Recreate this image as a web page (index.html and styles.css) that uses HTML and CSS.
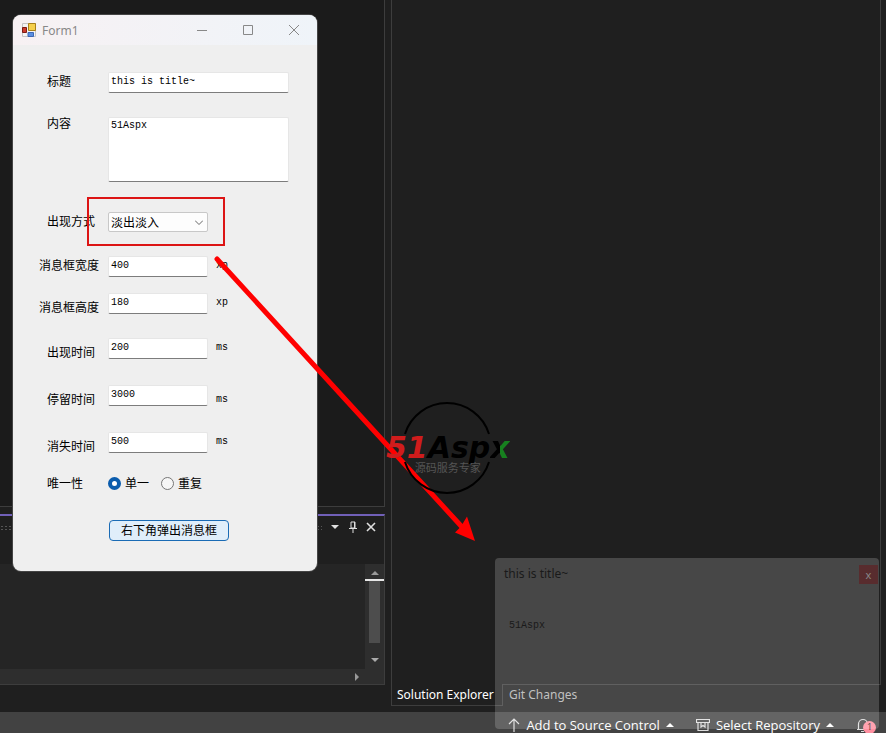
FILE: index.html
```html
<!DOCTYPE html>
<html lang="zh-CN">

<head>
    <meta charset="UTF-8">
    <meta name="viewport" content="width=device-width, initial-scale=1.0">
    <title>Form1</title>
    <link rel="stylesheet" href="styles.css">
</head>

<body>
    <!-- IDE behind the windows -->
    <main class="workspace">
        <section class="left-dock">
            <div class="editor"></div>
            <div class="output">
                <div class="output-header">
                    <span class="grip"></span>
                    <button class="tool" aria-label="Window position">
                        <svg width="10" height="10" viewBox="0 0 10 10"><path d="M1 3h8L5 7z" fill="#e0e0e0"/></svg>
                    </button>
                    <button class="tool" aria-label="Auto hide">
                        <svg width="10" height="12" viewBox="0 0 10 12"><path d="M3 1h4v6H3zM1 7.500h8M5 7v5M6.500 1v6" fill="none" stroke="#e0e0e0"/></svg>
                    </button>
                    <button class="tool" aria-label="Close">
                        <svg width="10" height="10" viewBox="0 0 10 10"><path d="M1 1l8 8M9 1L1 9" stroke="#e0e0e0" stroke-width="1.600"/></svg>
                    </button>
                </div>
                <div class="output-body">
                    <div class="output-text"></div>
                    <div class="vscroll">
                        <svg width="10" height="6" viewBox="0 0 10 6"><path d="M1 5h8L5 1z" fill="#999"/></svg>
                        <span class="caret-mark"></span>
                        <span class="thumb"></span>
                        <svg width="10" height="6" viewBox="0 0 10 6"><path d="M1 1h8L5 5z" fill="#aaa"/></svg>
                    </div>
                </div>
                <div class="hscroll">
                    <svg width="6" height="10" viewBox="0 0 6 10"><path d="M1 1v8l4-4z" fill="#999"/></svg>
                </div>
            </div>
        </section>
        <section class="right-dock">
            <div class="explorer"></div>
            <nav class="tabs">
                <a class="tab active" href="#">Solution Explorer</a>
                <a class="tab" href="#">Git Changes</a>
            </nav>
        </section>
    </main>

    <footer class="statusbar">
        <button class="status-item">
            <svg width="12" height="14" viewBox="0 0 12 14"><path d="M6 14V1M1 6l5-5 5 5" fill="none" stroke="#ddd" stroke-width="1.200"/></svg>
            <span>Add to Source Control</span>
            <svg width="8" height="4" viewBox="0 0 8 4"><path d="M0 4h8L4 0z" fill="#fff"/></svg>
        </button>
        <button class="status-item">
            <svg width="14" height="14" viewBox="0 0 14 14"><path d="M.5 1.500h13v3H.5zM2 4.500v8h10v-8M5 5v4l2-1.500L9 9V5" fill="none" stroke="#ddd" stroke-width="1.200"/></svg>
            <span>Select Repository</span>
            <svg width="8" height="4" viewBox="0 0 8 4"><path d="M0 4h8L4 0z" fill="#fff"/></svg>
        </button>
        <button class="status-item bell" aria-label="Notifications">
            <svg width="14" height="14" viewBox="0 0 14 14"><path d="M2.500 11V6a4.500 4.500 0 0 1 9 0v5M1 11.500h12M5 13.500h3" fill="none" stroke="#ddd" stroke-width="1.200"/></svg>
            <span class="badge">1</span>
        </button>
    </footer>

    <!-- message box fading in -->
    <aside class="message">
        <header class="message-header">
            <span class="message-title">this is title~</span>
            <button class="message-close">x</button>
        </header>
        <p class="message-text">51Aspx</p>
    </aside>

    <!-- Form1 -->
    <div class="window">
        <header class="titlebar">
            <svg width="14" height="14" viewBox="0 0 14 14">
                <path d="M.5.500h13v13H.5z" fill="#f4f4f4" stroke="#c4c4c4"/>
                <path d="M6.500.500h7v7h-7z" fill="#f5cf4b" stroke="#a8801a"/>
                <path d="M.5 4.500h4v5h-4z" fill="#cc3a2c" stroke="#7c1c14"/>
                <path d="M6 9.500h5.500v4H6z" fill="#5b8fe0" stroke="#3c66b4"/>
            </svg>
            <span class="window-title">Form1</span>
            <button class="caption" aria-label="Minimize">
                <svg width="10" height="10" viewBox="0 0 10 10"><path d="M0 5.500h10" stroke="#888"/></svg>
            </button>
            <button class="caption" aria-label="Maximize">
                <svg width="10" height="10" viewBox="0 0 10 10"><path d="M.5.500h9v9h-9z" fill="none" stroke="#888"/></svg>
            </button>
            <button class="caption" aria-label="Close">
                <svg width="10" height="10" viewBox="0 0 10 10"><path d="M0 0l10 10M10 0L0 10" stroke="#888"/></svg>
            </button>
        </header>
        <form class="form">
            <div class="row">
                <label for="title">标题</label>
                <input class="long" id="title" type="text" value="this is title~">
            </div>
            <div class="row">
                <label class="top" for="content">内容</label>
                <textarea class="long" id="content">51Aspx</textarea>
            </div>
            <div class="row far">
                <label for="mode">出现方式</label>
                <div class="select">
                    <select id="mode">
                        <option>淡出淡入</option>
                    </select>
                    <svg class="chevron" width="8" height="5" viewBox="0 0 8 5"><path d="M0 .5l4 4 4-4" fill="none" stroke="#666"/></svg>
                </div>
            </div>
            <div class="row">
                <label class="full" for="width">消息框宽度</label>
                <input id="width" type="text" value="400">
                <span class="unit">xp</span>
            </div>
            <div class="row near">
                <label class="full low" for="height">消息框高度</label>
                <input id="height" type="text" value="180">
                <span class="unit">xp</span>
            </div>
            <div class="row">
                <label class="low" for="show">出现时间</label>
                <input id="show" type="text" value="200">
                <span class="unit">ms</span>
            </div>
            <div class="row mid">
                <label class="low" for="stay">停留时间</label>
                <input id="stay" type="text" value="3000">
                <span class="unit low">ms</span>
            </div>
            <div class="row mid">
                <label class="low" for="hide">消失时间</label>
                <input id="hide" type="text" value="500">
                <span class="unit">ms</span>
            </div>
            <div class="row options" role="radiogroup" aria-labelledby="unique">
                <span class="label" id="unique">唯一性</span>
                <label class="option"><input type="radio" name="unique" checked>单一</label>
                <label class="option"><input type="radio" name="unique">重复</label>
            </div>
            <button class="submit" type="button">右下角弹出消息框</button>
        </form>
    </div>

    <!-- highlight box and arrow -->
    <svg class="marks" width="480" height="550" viewBox="0 0 480 550">
        <path d="M88 198h136v47H88z" fill="none" stroke="#dc1414" stroke-width="2"/>
        <path d="M217 259L462 527" stroke="#f00" stroke-width="5" stroke-linecap="round"/>
        <path d="M475 541l-20-8.500 6-6 6-10z" fill="#f00"/>
    </svg>

    <div class="logo">
        <svg class="ring" width="92" height="92" viewBox="0 0 92 92">
            <path d="M4 32A44 44 0 0 1 88 32M4 60A44 44 0 0 0 88 60" fill="none" stroke="#000" stroke-width="2"/>
        </svg>
        <div class="brand"><span class="num">51</span>Asp<span class="ex">x</span></div>
        <div class="slogan">源码服务专家</div>
    </div>
</body>

</html>
```
FILE: styles.css
```css
* {
    box-sizing: border-box;
}

body {
    position: relative;
    margin: 0;
    min-height: 100vh;
    display: flex;
    flex-direction: column;
    overflow: hidden;
    background-color: #1f1f1f;
    font-family: "Noto Sans", "Noto Sans CJK SC", sans-serif;
    font-size: 12px;
}

button {
    font: inherit;
    padding: 0;
    border: none;
    background: none;
}

svg {
    display: block;
    flex: none;
}

/* IDE */
.workspace {
    flex: 1;
    display: flex;
    gap: 6px;
    padding-right: 5px;
}

.left-dock {
    width: 385px;
    flex: none;
    display: flex;
    flex-direction: column;
    gap: 7px;
    padding-bottom: 27px;
}

.editor {
    flex: 1;
    background-color: #1b1b1b;
    border-right: 1px solid #3d3d3d;
    border-bottom: 1px solid #3d3d3d;
}

.output {
    border-top: 2px solid #7160b8;
    border-right: 1px solid #3d3d3d;
    border-bottom: 1px solid #3d3d3d;
}

.output-header {
    display: flex;
    align-items: center;
    gap: 8px;
    height: 48px;
    padding: 0 8px 26px 0;
}

.grip {
    flex: 1;
    height: 6px;
    margin-top: 2px;
    background-image: radial-gradient(#555 1px, transparent 1px);
    background-size: 4px 3px;
}

.tool {
    display: flex;
}

.output-body {
    display: flex;
    height: 105px;
}

.output-text {
    flex: 1;
    background-color: #252525;
}

.vscroll {
    width: 19px;
    padding: 6px 0;
    display: flex;
    flex-direction: column;
    align-items: center;
    background-color: #2e2e2e;
}

.caret-mark {
    width: 19px;
    height: 2px;
    margin-top: 3px;
    background-color: #e6e6e6;
}

.thumb {
    width: 11px;
    height: 62px;
    margin-bottom: 14px;
    background-color: #4d4d4d;
}

.hscroll {
    display: flex;
    align-items: center;
    justify-content: flex-end;
    height: 15px;
    padding-right: 24px;
    background-color: #2e2e2e;
}

.right-dock {
    flex: 1;
    display: flex;
    flex-direction: column;
    padding-bottom: 6px;
}

.explorer {
    flex: 1;
    border-left: 1px solid #3d3d3d;
    border-right: 1px solid #3d3d3d;
}

.tabs {
    display: flex;
}

.tab {
    flex: 1;
    height: 22px;
    padding-left: 6px;
    line-height: 20px;
    color: #b4b4b4;
    text-decoration: none;
    border-top: 1px solid #3d3d3d;
}

.tab.active {
    flex: none;
    width: 112px;
    padding-left: 5px;
    line-height: 22px;
    color: #fff;
    border: 1px solid #3d3d3d;
    border-top: none;
}

.statusbar {
    height: 21px;
    display: flex;
    align-items: center;
    justify-content: flex-end;
    gap: 22px;
    padding: 4px 10px 0 0;
    overflow: hidden;
    background-color: #424242;
    font-family: "Open Sans", sans-serif;
    font-size: 13px;
}

.status-item {
    display: flex;
    align-items: center;
    gap: 6px;
    color: #fff;
}

.bell {
    position: relative;
    padding-right: 6px;
}

.badge {
    position: absolute;
    right: 0;
    top: 3px;
    width: 13px;
    height: 13px;
    border-radius: 7px;
    background-color: #ff8fa0;
    color: #222;
    font-size: 9px;
    line-height: 12px;
}

/* message box */
.message {
    position: absolute;
    right: 7px;
    bottom: 4px;
    width: 384px;
    height: 171px;
    border-radius: 4px;
    background-color: rgba(255, 255, 255, 0.18);
    color: #1a1a1a;
}

.message-header {
    display: flex;
    justify-content: space-between;
    padding: 7px 1px 0 9px;
}

.message-title {
    line-height: 17px;
}

.message-close {
    width: 19px;
    height: 19px;
    background-color: #582c2e;
    color: #888;
    font-size: 11px;
    line-height: 18px;
}

.message-text {
    margin: 34px 0 0 14px;
    font: 10px/16px "Liberation Mono", monospace;
}

/* Form1 */
.window {
    position: absolute;
    left: 13px;
    top: 15px;
    width: 304px;
    border-radius: 8px;
    overflow: hidden;
    background-color: #efefef;
    box-shadow: 0 0 0 1px #444;
    color: #000;
}

.titlebar {
    display: flex;
    align-items: center;
    height: 30px;
    padding-left: 9px;
    background: linear-gradient(90deg, #f7f1f3, #eff4f9);
}

.window-title {
    flex: 1;
    margin-left: 6px;
    color: #888;
}

.caption {
    display: flex;
    justify-content: center;
    width: 46px;
}

.form {
    padding: 27px 28px 30px 26px;
}

.row {
    display: flex;
    align-items: flex-start;
    margin-top: 24px;
}

.row:first-child {
    margin-top: 0;
}

.row.near {
    margin-top: 16px;
}

.row.mid {
    margin-top: 26px;
}

.row.far {
    margin-top: 30px;
}

.row > label,
.label {
    width: 69px;
    padding-left: 8px;
    line-height: 20px;
}

.row > label.full {
    padding-left: 0;
}

.row > label.top {
    line-height: 14px;
}

.row > label.low {
    padding-top: 5px;
    margin-bottom: -4px;
}

.form input[type="text"],
.form textarea {
    width: 100px;
    height: 21px;
    padding: 0 2px 2px;
    border: 1px solid #e6e6e6;
    border-bottom-color: #7c7c7c;
    border-radius: 2px;
    background-color: #fff;
    color: #000;
    font: 10px/16px "Liberation Mono", monospace;
    resize: none;
    outline: none;
}

.form input.long,
.form textarea.long {
    width: 181px;
}

.form textarea.long {
    height: 65px;
}

.select {
    position: relative;
}

.select select {
    display: block;
    width: 100px;
    height: 20px;
    padding: 0 2px;
    appearance: none;
    border: 1px solid #c8c8c8;
    border-radius: 2px;
    background-color: #fdfdfd;
    color: #000;
    font: inherit;
}

.chevron {
    position: absolute;
    right: 5px;
    top: 8px;
}

.unit {
    margin-left: 8px;
    font: 10px/20px "Liberation Mono", monospace;
}

.unit.low {
    padding-top: 5px;
    margin-bottom: -4px;
}

.row.options {
    align-items: center;
    height: 13px;
}

.row > label.option {
    display: flex;
    align-items: center;
    gap: 4px;
    width: auto;
    padding: 0;
    margin-right: 12px;
}

.option input {
    appearance: none;
    width: 13px;
    height: 13px;
    margin: 0;
    border: 1px solid #777;
    border-radius: 50%;
    background-color: #f6f6f6;
}

.option input:checked {
    border: 4px solid #0a5cad;
    background-color: #fff;
}

.submit {
    display: block;
    width: 120px;
    height: 21px;
    margin: 30px 0 0 70px;
    border: 1px solid #1a6bb5;
    border-radius: 4px;
    background-color: #e0eefa;
    color: #000;
    line-height: 18px;
}

/* marks and logo over everything */
.marks {
    position: absolute;
    left: 0;
    top: 0;
}

.logo {
    position: absolute;
    left: 386px;
    top: 402px;
    padding-top: 32px;
    color: #000;
}

.ring {
    position: absolute;
    left: 15px;
    top: 0;
    overflow: visible;
}

.brand {
    position: relative;
    font: italic bold 30px/28px "DejaVu Sans", sans-serif;
}

.num {
    color: #d01c1c;
}

.ex {
    color: transparent;
    background: linear-gradient(90deg, #000 50%, #17801f 50%);
    background-clip: text;
    -webkit-background-clip: text;
}

.slogan {
    position: relative;
    color: #555;
    font-size: 11px;
    line-height: 12px;
    text-align: center;
}
```
